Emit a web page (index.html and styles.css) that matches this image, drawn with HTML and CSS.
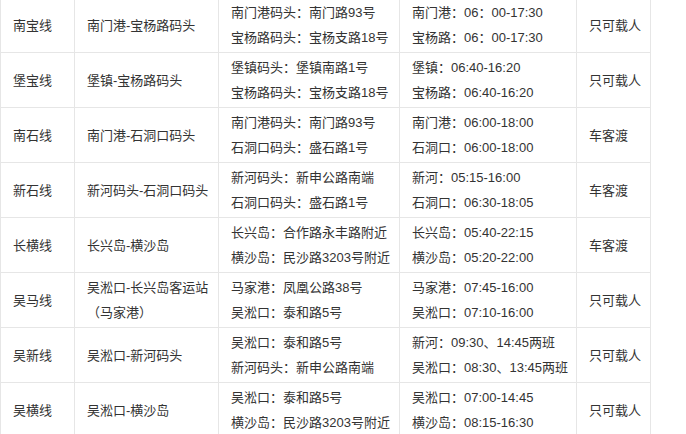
FILE: index.html
```html
<!DOCTYPE html>
<html lang="zh-CN">
<head>
<meta charset="utf-8">
<title>轮渡线路</title>
<link rel="stylesheet" href="styles.css">
</head>
<body>
<table class="ferry">
  <colgroup>
    <col class="c-line">
    <col class="c-route">
    <col class="c-addr">
    <col class="c-time">
    <col class="c-type">
  </colgroup>
  <tbody>
    <tr>
      <td>南宝线</td>
      <td>南门港-宝杨路码头</td>
      <td>南门港码头：南门路93号<br>宝杨路码头：宝杨支路18号</td>
      <td>南门港：06：00-17:30<br>宝杨路：06：00-17:30</td>
      <td>只可载人</td>
    </tr>
    <tr>
      <td>堡宝线</td>
      <td>堡镇-宝杨路码头</td>
      <td>堡镇码头：堡镇南路1号<br>宝杨路码头：宝杨支路18号</td>
      <td>堡镇：06:40-16:20<br>宝杨路：06:40-16:20</td>
      <td>只可载人</td>
    </tr>
    <tr>
      <td>南石线</td>
      <td>南门港-石洞口码头</td>
      <td>南门港码头：南门路93号<br>石洞口码头：盛石路1号</td>
      <td>南门港：06:00-18:00<br>石洞口：06:00-18:00</td>
      <td>车客渡</td>
    </tr>
    <tr>
      <td>新石线</td>
      <td>新河码头-石洞口码头</td>
      <td>新河码头：新申公路南端<br>石洞口码头：盛石路1号</td>
      <td>新河：05:15-16:00<br>石洞口：06:30-18:05</td>
      <td>车客渡</td>
    </tr>
    <tr>
      <td>长横线</td>
      <td>长兴岛-横沙岛</td>
      <td>长兴岛：合作路永丰路附近<br>横沙岛：民沙路3203号附近</td>
      <td>长兴岛：05:40-22:15<br>横沙岛：05:20-22:00</td>
      <td>车客渡</td>
    </tr>
    <tr>
      <td>吴马线</td>
      <td>吴淞口-长兴岛客运站<br>（马家港）</td>
      <td>马家港：凤凰公路38号<br>吴淞口：泰和路5号</td>
      <td>马家港：07:45-16:00<br>吴淞口：07:10-16:00</td>
      <td>只可载人</td>
    </tr>
    <tr>
      <td>吴新线</td>
      <td>吴淞口-新河码头</td>
      <td>吴淞口：泰和路5号<br>新河码头：新申公路南端</td>
      <td>新河：09:30、14:45两班<br>吴淞口：08:30、13:45两班</td>
      <td>只可载人</td>
    </tr>
    <tr>
      <td>吴横线</td>
      <td>吴淞口-横沙岛</td>
      <td>吴淞口：泰和路5号<br>横沙岛：民沙路3203号附近</td>
      <td>吴淞口：07:00-14:45<br>横沙岛：08:15-16:30</td>
      <td>只可载人</td>
    </tr>
  </tbody>
</table>
</body>
</html>
```

FILE: styles.css
```css
html, body {
  margin: 0;
  padding: 0;
  background: #ffffff;
}

body {
  font-family: "Liberation Sans", "Noto Sans CJK SC", sans-serif;
  font-size: 13px;
  color: #333333;
}

.ferry {
  border-collapse: collapse;
  table-layout: fixed;
  width: 651px;
  margin-top: -3px;
}

.c-line { width: 74px; }
.c-route { width: 144px; }
.c-addr { width: 181px; }
.c-time { width: 177px; }
.c-type { width: 74px; }

.ferry td {
  border: 1px solid #e6e6e6;
  padding: 2px 10px 2px 12px;
  line-height: 25px;
  height: 50px;
  vertical-align: middle;
  white-space: nowrap;
  overflow: hidden;
}
```
